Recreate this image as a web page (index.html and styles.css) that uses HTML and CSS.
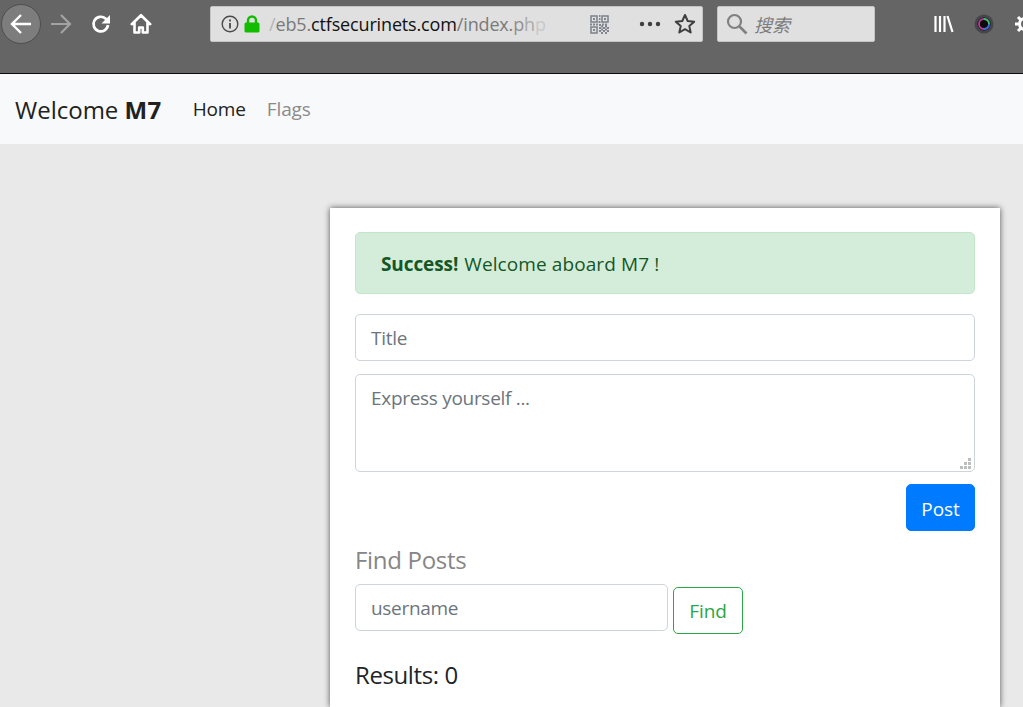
FILE: index.html
```html
<!DOCTYPE html>
<html lang="en">
<head>
<meta charset="utf-8">
<title>Welcome M7</title>
<link rel="stylesheet" href="styles.css">
</head>
<body>
<header class="chrome">
  <div class="nav-btns">
    <span class="back"><svg width="26" height="26" viewBox="0 0 26 26"><path d="M23 13H4M13 4l-9 9 9 9" fill="none" stroke="#fff" stroke-width="2.4"/></svg></span>
    <svg class="fwd" width="24" height="24" viewBox="0 0 24 24"><path d="M2 12h19M12 3l9 9-9 9" fill="none" stroke="#a3a3a3" stroke-width="2.2"/></svg>
    <svg class="reload" width="20" height="20" viewBox="0 0 20 20"><path d="M17 11a7.300 7.300 0 1 1-2.300-6.300L17.500 7.500" fill="none" stroke="#fff" stroke-width="2.700"/><path d="M19 1v8.500h-8.500z" fill="#fff"/></svg>
    <svg class="home" width="22" height="22" viewBox="0 0 22 22"><path d="M1.800 11.200L11 2.200l9.200 9M4.500 9.500V19.500H9.200V14.500h3.600v5h4.700V9.500" fill="none" stroke="#fff" stroke-width="2.600" stroke-linejoin="round" stroke-linecap="round"/></svg>
  </div>
  <div class="urlbar">
    <svg class="info" width="18" height="18" viewBox="0 0 18 18"><circle cx="9" cy="9" r="7.800" fill="none" stroke="#4a4a4a" stroke-width="1.400"/><path d="M9 8v5.500M9 4.500v2" stroke="#4a4a4a" stroke-width="1.800"/></svg>
    <svg class="lock" width="16" height="18" viewBox="0 0 16 18"><path d="M4 8V5.500a4 4 0 0 1 8 0V8" fill="none" stroke="#12bc00" stroke-width="2.400"/><rect x="0.500" y="7.500" width="15" height="10" rx="1.500" fill="#12bc00"/></svg>
    <span class="url"><span class="fade-1">/</span><span class="faint">eb5.</span><span class="domain">ctfsecurinets.com</span><span class="faint">/index.</span><span class="fade-2">p</span><span class="fade-3">h</span><span class="fade-4">p</span></span>
    <svg class="qr" width="19" height="19" viewBox="0 0 19 19"><g fill="none" stroke="#80858f" stroke-width="1.600"><rect x="1" y="1" width="6" height="6"/><rect x="12" y="1" width="6" height="6"/><rect x="1" y="12" width="6" height="6"/></g><path d="M3 3h2v2H3zM14 3h2v2h-2zM3 14h2v2H3zM9 0h1.500v2H9zM9 3h1.500v2H9zM8.500 6h2v2h-2zM0 8.500h2v2H0zM3 8.500h2v2H3zM6 8.500h2v2H6zM9 9h2v2H9zM12 8.500h2v2h-2zM15 8.500h2v2h-2zM9 12h2v2H9zM11 10.500h2v2h-2zM13 12h2v2h-2zM15 10.500h2v2h-2zM17 12h2v2h-2zM9 15h2v2H9zM11 13.500h2v2h-2zM13 15h2v2h-2zM15 13.500h2v2h-2zM17 15h2v2h-2zM11 17h2v2h-2zM15 17h2v2h-2z" fill="#80858f"/></svg>
    <svg class="dots" width="22" height="6" viewBox="0 0 22 6"><circle cx="3" cy="3" r="2.200" fill="#3f3f3f"/><circle cx="11" cy="3" r="2.200" fill="#3f3f3f"/><circle cx="19" cy="3" r="2.200" fill="#3f3f3f"/></svg>
    <svg class="star" width="22" height="22" viewBox="0 0 22 22"><path d="M11 2l2.700 6 6.500.7-4.900 4.400 1.400 6.400L11 16.200l-5.700 3.300 1.400-6.400-4.900-4.400 6.500-.7z" fill="none" stroke="#3f3f3f" stroke-width="2" stroke-linejoin="round"/></svg>
  </div>
  <div class="searchbar">
    <svg width="22" height="22" viewBox="0 0 22 22"><circle cx="8.500" cy="8.500" r="6.500" fill="none" stroke="#808080" stroke-width="2.200"/><path d="M13.500 13.500l7 7" stroke="#808080" stroke-width="2.600"/></svg>
    <span class="search-text">搜索</span>
  </div>
  <div class="tools">
    <svg width="20" height="20" viewBox="0 0 20 20"><path d="M1.500 2v16M6 2v16M10.500 2v16M13.500 2l5 16" stroke="#fff" stroke-width="2.200" fill="none"/></svg>
    <svg width="20" height="20" viewBox="0 0 20 20"><circle cx="10" cy="10" r="9.500" fill="#44464c"/><circle cx="10" cy="10" r="6.500" fill="#0b0b0b"/><circle cx="10" cy="10" r="5" fill="none" stroke="#c43a9c" stroke-width="1.800"/><path d="M10 5a5 5 0 0 1 5 5" fill="none" stroke="#35c46a" stroke-width="1.800"/><path d="M15 10a5 5 0 0 1-5 5" fill="none" stroke="#2f6fe0" stroke-width="1.800"/><circle cx="10" cy="10" r="3" fill="#0b0b0b"/></svg>
    <svg class="gear" width="22" height="22" viewBox="0 0 22 22"><circle cx="11" cy="11" r="5.500" fill="none" stroke="#fff" stroke-width="3"/><path d="M11 1v4M11 17v4M1 11h4M17 11h4M4 4l3 3M15 15l3 3M18 4l-3 3M7 15l-3 3" stroke="#fff" stroke-width="3"/></svg>
  </div>
</header>

<nav class="navbar">
  <a class="brand" href="#">Welcome <b>M7</b></a>
  <a class="nav-link active" href="#">Home</a>
  <a class="nav-link" href="#">Flags</a>
</nav>

<main class="card">
  <div class="alert"><b>Success!</b> <span class="alert-text">Welcome aboard M7 !</span></div>
  <input class="field title-field" type="text" placeholder="Title">
  <div class="text-wrap">
    <textarea class="field text-field" placeholder="Express yourself ..."></textarea>
    <svg class="grip" width="11" height="11" viewBox="0 0 11 11"><path d="M8 0h3v3H8zM4 4h3v3H4zM8 4h3v3H8zM0 8h3v3H0zM4 8h3v3H4zM8 8h3v3H8z" fill="#bdbdbd"/></svg>
  </div>
  <div class="post-row"><button class="btn btn-post" type="button">Post</button></div>
  <h5 class="find-title">Find Posts</h5>
  <div class="find-row">
    <input class="field user-field" type="text" placeholder="username">
    <button class="btn btn-find" type="button">Find</button>
  </div>
  <h5 class="results">Results: 0</h5>
</main>
</body>
</html>
```

FILE: styles.css
```css
* { box-sizing: border-box; }
html, body { height: 100%; }
body {
  margin: 0;
  height: 707px;
  overflow: hidden;
  background: #e9e9e9;
  color: #212529;
  font-family: "Open Sans", "Noto Sans", "Liberation Sans", sans-serif;
  font-size: 19px;
}
.chrome {
  display: flex;
  align-items: flex-start;
  height: 74px;
  padding-top: 6px;
  background: #656565;
  border-bottom: 1px solid #0c0c0c;
  overflow: hidden;
}
.nav-btns {
  display: flex;
  align-items: center;
  width: 210px;
  height: 36px;
  flex: none;
}
.back {
  display: flex;
  align-items: center;
  justify-content: center;
  width: 40px;
  height: 40px;
  margin-left: 1px;
  border-radius: 50%;
  background: #7d7d7d;
  border: 1px solid #4e4e4e;
  flex: none;
}
.fwd { margin-left: 8px; flex: none; }
.reload { margin-left: 18px; flex: none; }
.home { margin-left: 19px; flex: none; }
.urlbar {
  display: flex;
  align-items: center;
  flex: none;
  width: 493px;
  height: 36px;
  padding-left: 10px;
  background: #e0e0e0;
  border: 1px solid #c4c4c4;
  border-radius: 2px;
}
.lock { margin-left: 5px; flex: none; }
.url {
  margin-left: 9px;
  width: 278px;
  font-size: 18px;
  letter-spacing: -0.15px;
  white-space: nowrap;
  flex: none;
}
.domain { color: #111; }
.faint { color: #7a7a7a; }
.fade-1 { color: #b5b5b5; }
.fade-2 { color: #8f8f8f; }
.fade-3 { color: #aaa; }
.fade-4 { color: #c8c8c8; }
.qr { margin-left: 43px; flex: none; }
.dots { margin-left: 30px; flex: none; }
.star { margin-left: 13px; flex: none; }
.searchbar {
  display: flex;
  align-items: center;
  gap: 6px;
  flex: none;
  width: 158px;
  height: 36px;
  margin-left: 14px;
  padding-left: 8px;
  background: #e0e0e0;
  border: 1px solid #c4c4c4;
  border-radius: 2px;
}
.search-text {
  color: #7c7c7c;
  font-family: "Noto Sans CJK SC", sans-serif;
  font-style: italic;
  font-size: 18px;
}
.tools {
  display: flex;
  align-items: center;
  gap: 20px;
  height: 36px;
  margin-left: 59px;
  flex: none;
}
.navbar {
  display: flex;
  align-items: center;
  height: 70px;
  padding-left: 15px;
  background: #f8f9fa;
}
.navbar a { text-decoration: none; }
.brand {
  color: #212121;
  font-size: 24px;
  letter-spacing: 0;
  margin-right: 31px;
}
.brand b { letter-spacing: 0.4px; }
.nav-link {
  color: #8b8b8b;
  margin-right: 21px;
  letter-spacing: -0.15px;
}
.nav-link.active { color: #212121; }
.card {
  width: 670px;
  height: 499px;
  margin: 64px 0 0 330px;
  padding: 24px 25px;
  overflow: hidden;
  background: #fff;
  box-shadow: 0 0 6px rgba(0, 0, 0, 0.65);
}
.alert {
  display: flex;
  align-items: center;
  gap: 6px;
  height: 62px;
  margin-bottom: 20px;
  padding: 2px 0 0 25px;
  color: #155724;
  background: #d4edda;
  border: 1px solid #c3e6cb;
  border-radius: 5px;
}
.alert b { letter-spacing: -0.1px; }
.alert-text { letter-spacing: 0.1px; }
.field {
  display: block;
  height: 47px;
  padding: 0 15px;
  border: 1px solid #ced4da;
  border-radius: 5px;
  background: #fff;
  font: inherit;
  letter-spacing: -0.3px;
  color: #495057;
  outline: none;
}
.field::placeholder { color: #6c757d; opacity: 1; }
.title-field { width: 100%; margin-bottom: 13px; }
.text-wrap { position: relative; margin-bottom: 12px; }
.text-field {
  width: 100%;
  height: 98px;
  padding-top: 9px;
  line-height: 28px;
  resize: none;
}
.grip { position: absolute; right: 4px; bottom: 3px; }
.post-row { display: flex; justify-content: flex-end; }
.btn {
  height: 47px;
  padding: 2px 0 0;
  border-radius: 5px;
  font: inherit;
  letter-spacing: -0.1px;
}
.btn-post {
  width: 69px;
  background: #007bff;
  border: 1px solid #007bff;
  color: #fff;
}
h5 {
  margin: 0;
  font-weight: 400;
  font-size: 24px;
  letter-spacing: -0.3px;
  line-height: 28px;
}
.find-title { margin-top: 15px; color: #868686; }
.find-row { display: flex; align-items: flex-start; gap: 5px; margin-top: 10px; }
.user-field { width: 313px; }
.btn-find {
  width: 70px;
  margin-top: 3px;
  padding-top: 0;
  background: #fff;
  border: 1px solid #28a745;
  color: #28a745;
}
.results { margin-top: 27px; color: #212529; letter-spacing: -0.4px; }
```
